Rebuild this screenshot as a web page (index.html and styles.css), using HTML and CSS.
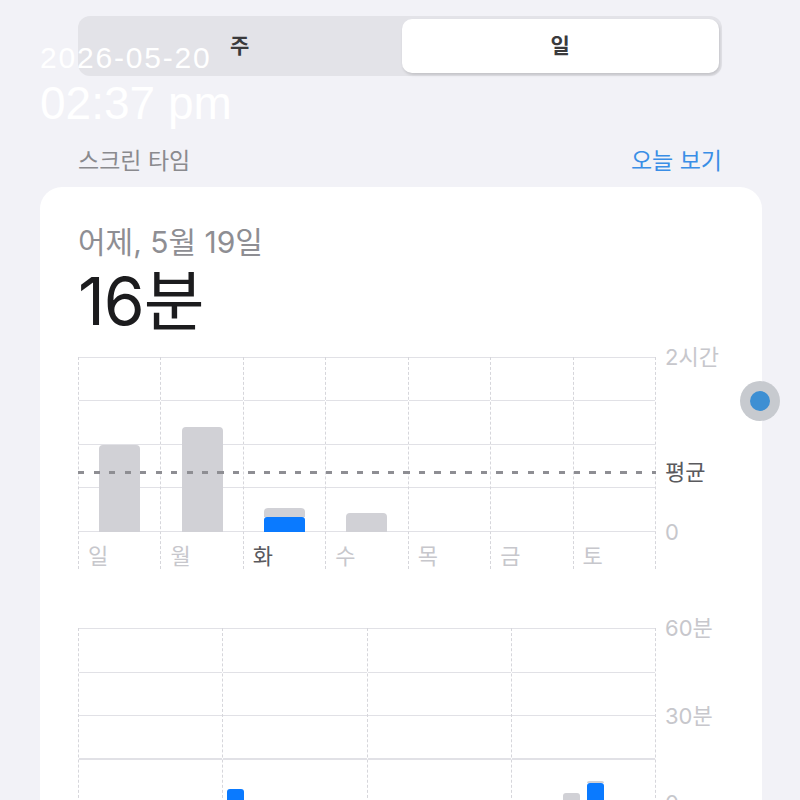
FILE: index.html
```html
<!DOCTYPE html>
<html lang="ko">
<head>
  <meta charset="UTF-8">
  <title>스크린 타임</title>
  <link rel="stylesheet" href="styles.css">
</head>
<body>
  <div class="page">
    <div class="segment">
      <div class="seg-item">주</div>
      <div class="seg-item active">일</div>
    </div>

    <div class="section-head">
      <span class="section-title">스크린 타임</span>
      <span class="section-link">오늘 보기</span>
    </div>

    <div class="card">
      <div class="card-date">어제, 5월 19일</div>
      <div class="card-total">16분</div>

      <!-- weekly chart -->
      <div class="chart">
        <div class="plot">
          <div class="cols week">
            <div class="col">
              <div class="bar-area"><div class="bar" style="height:87px"></div></div>
              <div class="day">일</div>
            </div>
            <div class="col">
              <div class="bar-area"><div class="bar" style="height:105px"></div></div>
              <div class="day">월</div>
            </div>
            <div class="col">
              <div class="bar-area">
                <div class="bar stack">
                  <div class="seg-gray" style="height:9px"></div>
                  <div class="seg-blue" style="height:15px"></div>
                </div>
              </div>
              <div class="day today">화</div>
            </div>
            <div class="col">
              <div class="bar-area"><div class="bar" style="height:19px"></div></div>
              <div class="day">수</div>
            </div>
            <div class="col">
              <div class="bar-area"></div>
              <div class="day">목</div>
            </div>
            <div class="col">
              <div class="bar-area"></div>
              <div class="day">금</div>
            </div>
            <div class="col">
              <div class="bar-area"></div>
              <div class="day">토</div>
            </div>
          </div>
          <div class="avg-line">
            <div class="avg-dash"></div>
            <span class="avg-label">평균</span>
          </div>
        </div>
        <div class="axis">
          <span>2시간</span>
          <span>0</span>
        </div>
      </div>

      <!-- hourly chart -->
      <div class="chart hourly">
        <div class="plot">
          <div class="cols quarter">
            <div class="col">
              <div class="bar-area hours"></div>
            </div>
            <div class="col">
              <div class="bar-area hours">
                <div class="hbar" style="height:14px"></div>
                <div></div><div></div><div></div><div></div><div></div>
              </div>
            </div>
            <div class="col">
              <div class="bar-area hours"></div>
            </div>
            <div class="col">
              <div class="bar-area hours">
                <div></div><div></div>
                <div class="hbar gray" style="height:10px"></div>
                <div class="hbar stack">
                  <div class="seg-gray" style="height:2px"></div>
                  <div class="seg-blue" style="height:20px"></div>
                </div>
                <div></div><div></div>
              </div>
            </div>
          </div>
        </div>
        <div class="axis three">
          <span>60분</span>
          <span>30분</span>
          <span>0</span>
        </div>
      </div>
    </div>
  </div>

  <div class="clock">
    <div class="clock-date">2026-05-20</div>
    <div class="clock-time">02:37 pm</div>
  </div>

  <div class="assist"><span></span></div>
</body>
</html>
```

FILE: styles.css
```css
html, body {
  margin: 0;
  height: 100%;
  overflow: hidden;
}

body {
  background: #f2f2f7;
  font-family: "Inter", "Noto Sans CJK KR", sans-serif;
  color: #1c1c1e;
  position: relative;
}

.page {
  padding-top: 16px;
}

/* segmented control */
.segment {
  margin: 0 78px;
  height: 60px;
  box-sizing: border-box;
  padding: 3px;
  background: #e3e3e8;
  border-radius: 12px;
  display: grid;
  grid-template-columns: 1fr 1fr;
  gap: 3px;
}

.seg-item {
  display: flex;
  align-items: center;
  justify-content: center;
  font-size: 21px;
  font-weight: 600;
  color: #3a3a3c;
  padding-bottom: 4px;
}

.seg-item.active {
  background: #fff;
  border-radius: 10px;
  box-shadow: 1px 2px 3px rgba(0, 0, 0, 0.14);
}

/* section header */
.section-head {
  margin: 69px 78px 0 78px;
  height: 28px;
  display: flex;
  justify-content: space-between;
  align-items: center;
  font-size: 23px;
}

.section-title {
  color: #8a8a8e;
}

.section-link {
  color: #3a8ee6;
}

/* card */
.card {
  margin: 14px 38px 0 40px;
  background: #fff;
  border-radius: 22px;
  padding: 37px 0 40px 38px;
  height: 800px;
}

.card-date {
  font-size: 30px;
  color: #8e8e93;
  line-height: 36px;
}

.card-total {
  font-size: 66px;
  line-height: 76px;
  margin-top: 3px;
  letter-spacing: -1px;
}

/* charts */
.chart {
  display: flex;
  margin-top: 18px;
}

.chart.hourly {
  margin-top: 59px;
}

.plot {
  position: relative;
  width: 578px;
}

.cols {
  display: grid;
  border-right: 1px dashed #d6d6db;
}

.cols.week {
  grid-template-columns: repeat(7, 1fr);
}

.cols.quarter {
  grid-template-columns: repeat(4, 1fr);
}

.col {
  border-left: 1px dashed #d6d6db;
}

.bar-area {
  height: 175px;
  display: flex;
  justify-content: center;
  align-items: flex-end;
  background: repeating-linear-gradient(to bottom, #e1e1e6 0 1px, transparent 1px 43.5px);
}

.bar {
  width: 41px;
  background: #d1d1d6;
  border-radius: 4px 4px 0 0;
}

.bar.stack,
.hbar.stack {
  background: none;
  display: flex;
  flex-direction: column;
}

.seg-gray {
  background: #d1d1d6;
  border-radius: 4px 4px 0 0;
}

.seg-blue {
  background: #0a7aff;
  border-radius: 3px 3px 0 0;
}

.day {
  height: 37px;
  box-sizing: border-box;
  padding: 11px 0 0 9px;
  font-size: 22px;
  line-height: 26px;
  color: #c7c7cc;
}

.day.today {
  color: #5a5a5e;
}

.avg-line {
  position: absolute;
  left: 0;
  top: 104px;
  height: 22px;
  display: flex;
  align-items: center;
  white-space: nowrap;
}

.avg-dash {
  flex: none;
  width: 578px;
  height: 3px;
  background: repeating-linear-gradient(to right, #8e8e93 0 6px, transparent 6px 15.5px);
}

.avg-label {
  margin-left: 9px;
  font-size: 22px;
  line-height: 22px;
  color: #5a5a5e;
}

.axis {
  margin-left: 9px;
  margin-top: -11px;
  height: 197px;
  display: flex;
  flex-direction: column;
  justify-content: space-between;
  font-size: 22px;
  line-height: 22px;
  color: #c7c7cc;
  white-space: nowrap;
}

.hours {
  display: grid;
  grid-template-columns: repeat(6, 1fr);
  justify-items: center;
  align-items: end;
}

.hbar {
  width: 17px;
  background: #0a7aff;
  border-radius: 3px 3px 0 0;
}

.hbar.gray {
  background: #d1d1d6;
}

/* clock overlay */
.clock {
  position: absolute;
  left: 40px;
  top: 40px;
  color: #fff;
  font-family: "Liberation Sans", Arial, sans-serif;
}

.clock-date {
  font-size: 30px;
  line-height: 36px;
  letter-spacing: 1.8px;
}

.clock-time {
  font-size: 46px;
  line-height: 54px;
}

/* floating touch button */
.assist {
  position: absolute;
  left: 740px;
  top: 381px;
  width: 40px;
  height: 40px;
  border-radius: 50%;
  background: #c7cacf;
  display: flex;
  align-items: center;
  justify-content: center;
}

.assist span {
  width: 20px;
  height: 20px;
  border-radius: 50%;
  background: #3d8fd3;
}
```
